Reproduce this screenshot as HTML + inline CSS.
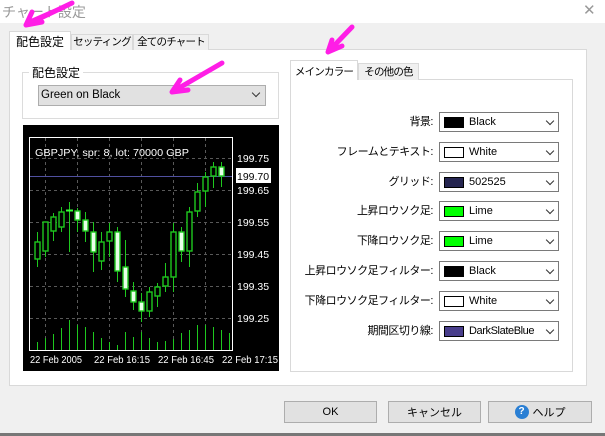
<!DOCTYPE html>
<html><head><meta charset="utf-8"><style>
*{margin:0;padding:0;box-sizing:border-box}
body{width:605px;height:436px;background:#f0f0f0;position:relative;overflow:hidden;font-family:"Liberation Sans","Noto Sans CJK JP",sans-serif;font-size:11px;color:#000}
.a{position:absolute}
.tab{position:absolute;border:1px solid #d9d9d9;border-bottom:none;background:#f0f0f0;text-align:center;line-height:17px;font-size:10.5px;white-space:nowrap;overflow:hidden;letter-spacing:-0.8px}
.combo{position:absolute;left:439px;width:120px;height:20px;border:1px solid #7a7a7a;background:#fff}
.sw{position:absolute;left:4px;top:4px;width:20px;height:11px;border:1px solid #000}
.ct{position:absolute;left:29px;top:2px;line-height:15px;font-size:11px;white-space:nowrap}
.chev{position:absolute;right:5px;top:5px;width:6px;height:6px;border-right:1px solid #333;border-bottom:1px solid #333;transform:rotate(45deg)}
.lbl{position:absolute;right:172px;text-align:right;font-size:11px;line-height:20px;white-space:nowrap;letter-spacing:-0.5px}
.btn{position:absolute;top:401px;height:22px;border:1px solid #adadad;background:#e1e1e1;display:flex;align-items:center;justify-content:center;font-size:11px}
</style></head><body>
<div class="a" style="left:0;top:0;width:605px;height:23px;background:#fff"></div>
<div class="a" style="left:2px;top:2px;font-size:14px;color:#999">チャート設定</div>
<div class="a" style="left:583px;top:1px;font-size:15px;color:#999">✕</div>

<div class="a" style="left:9px;top:49px;width:578px;height:337px;background:#fff;border:1px solid #d9d9d9"></div>
<div class="tab" style="left:9px;top:31px;width:62px;height:19px;background:#fff;font-size:12px;line-height:20px;z-index:2;letter-spacing:0">配色設定</div>
<div class="tab" style="left:71px;top:34px;width:62px;height:16px;line-height:15px">セッティング</div>
<div class="tab" style="left:133px;top:34px;width:76px;height:16px;line-height:15px">全てのチャート</div>

<div class="a" style="left:22px;top:72px;width:257px;height:47px;border:1px solid #dcdcdc"></div>
<div class="a" style="left:29px;top:64px;background:#fff;padding:0 3px;font-size:12px">配色設定</div>
<div class="a" style="left:38px;top:85px;width:228px;height:21px;border:1px solid #adadad;background:#e1e1e1"><span class="a" style="left:2px;top:3px;font-size:11.5px">Green on Black</span><div class="chev" style="top:4px;right:6px"></div></div>

<svg class="a" style="left:23px;top:125px" width="256" height="246" viewBox="23 125 256 246">
<rect x="23" y="125" width="256" height="246" fill="#000"/>
<g stroke="#fff" stroke-width="1" stroke-dasharray="3,3" opacity="0.35">
<line x1="30" y1="158.5" x2="232" y2="158.5"/><line x1="30" y1="190.5" x2="232" y2="190.5"/><line x1="30" y1="222.5" x2="232" y2="222.5"/><line x1="30" y1="254.5" x2="232" y2="254.5"/><line x1="30" y1="286.5" x2="232" y2="286.5"/><line x1="30" y1="318.5" x2="232" y2="318.5"/>
<line x1="45.5" y1="138" x2="45.5" y2="350"/><line x1="77.5" y1="138" x2="77.5" y2="350"/><line x1="109.5" y1="138" x2="109.5" y2="350"/><line x1="141.5" y1="138" x2="141.5" y2="350"/><line x1="173.5" y1="138" x2="173.5" y2="350"/><line x1="205.5" y1="138" x2="205.5" y2="350"/>
</g>
<line x1="30" y1="176.5" x2="232" y2="176.5" stroke="#5050a0"/>
<g stroke="#1ec81e" stroke-width="1">
<line x1="37.5" y1="232" x2="37.5" y2="267"/><line x1="45.5" y1="222" x2="45.5" y2="257"/><line x1="53.5" y1="213" x2="53.5" y2="241"/><line x1="61.5" y1="207" x2="61.5" y2="232"/><line x1="69.5" y1="202" x2="69.5" y2="252"/><line x1="77.5" y1="208" x2="77.5" y2="232"/><line x1="85.5" y1="212" x2="85.5" y2="242"/><line x1="93.5" y1="222" x2="93.5" y2="272"/><line x1="101.5" y1="232" x2="101.5" y2="270"/><line x1="109.5" y1="223" x2="109.5" y2="257"/><line x1="117.5" y1="227" x2="117.5" y2="282"/><line x1="125.5" y1="240" x2="125.5" y2="297"/><line x1="133.5" y1="282" x2="133.5" y2="310"/><line x1="141.5" y1="293" x2="141.5" y2="322"/><line x1="149.5" y1="287" x2="149.5" y2="317"/><line x1="157.5" y1="283" x2="157.5" y2="307"/><line x1="165.5" y1="263" x2="165.5" y2="292"/><line x1="173.5" y1="223" x2="173.5" y2="292"/><line x1="181.5" y1="227" x2="181.5" y2="262"/><line x1="189.5" y1="207" x2="189.5" y2="267"/><line x1="197.5" y1="183" x2="197.5" y2="217"/><line x1="205.5" y1="172" x2="205.5" y2="207"/><line x1="213.5" y1="162" x2="213.5" y2="188"/><line x1="221.5" y1="162" x2="221.5" y2="187"/>
</g>
<g stroke="#1ec81e" stroke-width="1.4" fill="#000">
<rect x="35" y="242" width="5" height="17"/><rect x="43" y="222" width="5" height="29"/><rect x="51" y="217" width="5" height="14"/><rect x="59" y="212" width="5" height="15"/><rect x="99" y="242" width="5" height="19"/><rect x="107" y="232" width="5" height="9"/><rect x="147" y="292" width="5" height="19"/><rect x="155" y="287" width="5" height="9"/><rect x="163" y="277" width="5" height="9"/><rect x="171" y="232" width="5" height="45"/><rect x="187" y="212" width="5" height="39"/><rect x="195" y="192" width="5" height="19"/><rect x="203" y="177" width="5" height="14"/><rect x="211" y="167" width="5" height="9"/>
</g>
<g stroke="#1ec81e" stroke-width="1.4" fill="#e8ffe8">
<rect x="75" y="211" width="5" height="9"/><rect x="83" y="220" width="5" height="11"/><rect x="91" y="232" width="5" height="20"/><rect x="115" y="232" width="5" height="39"/><rect x="123" y="267" width="5" height="22"/><rect x="131" y="291" width="5" height="11"/><rect x="139" y="302" width="5" height="9"/><rect x="179" y="232" width="5" height="19"/><rect x="219" y="167" width="5" height="9"/>
</g>
<line x1="66" y1="210.5" x2="73" y2="210.5" stroke="#3f3" stroke-width="2"/>
<g stroke="#1ec81e" stroke-width="1">
<line x1="37.5" y1="342" x2="37.5" y2="350"/><line x1="45.5" y1="338" x2="45.5" y2="350"/><line x1="53.5" y1="334" x2="53.5" y2="350"/><line x1="61.5" y1="328" x2="61.5" y2="350"/><line x1="69.5" y1="320" x2="69.5" y2="350"/><line x1="77.5" y1="325" x2="77.5" y2="350"/><line x1="85.5" y1="327" x2="85.5" y2="350"/><line x1="93.5" y1="332" x2="93.5" y2="350"/><line x1="101.5" y1="338" x2="101.5" y2="350"/><line x1="109.5" y1="342" x2="109.5" y2="350"/><line x1="117.5" y1="345" x2="117.5" y2="350"/><line x1="125.5" y1="332" x2="125.5" y2="350"/><line x1="133.5" y1="337" x2="133.5" y2="350"/><line x1="141.5" y1="332" x2="141.5" y2="350"/><line x1="149.5" y1="338" x2="149.5" y2="350"/><line x1="157.5" y1="342" x2="157.5" y2="350"/><line x1="165.5" y1="341" x2="165.5" y2="350"/><line x1="173.5" y1="339" x2="173.5" y2="350"/><line x1="181.5" y1="333" x2="181.5" y2="350"/><line x1="189.5" y1="330" x2="189.5" y2="350"/><line x1="197.5" y1="325" x2="197.5" y2="350"/><line x1="205.5" y1="325" x2="205.5" y2="350"/><line x1="213.5" y1="327" x2="213.5" y2="350"/><line x1="221.5" y1="330" x2="221.5" y2="350"/><line x1="229.5" y1="333" x2="229.5" y2="350"/>
</g>
<rect x="29.5" y="137.5" width="203" height="213" fill="none" stroke="#fff"/>
<g fill="#fff" font-family="Liberation Sans,sans-serif" font-size="10.5">
<text x="35" y="156" textLength="154" lengthAdjust="spacingAndGlyphs">GBPJPY, spr: 8, lot: 70000 GBP</text>
<text x="237" y="162">199.75</text><text x="237" y="194">199.65</text><text x="237" y="226">199.55</text><text x="237" y="258">199.45</text><text x="237" y="290">199.35</text><text x="237" y="322">199.25</text>
<text x="30" y="363" textLength="52" lengthAdjust="spacingAndGlyphs" font-size="10">22 Feb 2005</text><text x="94" y="363" textLength="56" lengthAdjust="spacingAndGlyphs" font-size="10">22 Feb 16:15</text><text x="158" y="363" textLength="56" lengthAdjust="spacingAndGlyphs" font-size="10">22 Feb 16:45</text><text x="222" y="363" textLength="56" lengthAdjust="spacingAndGlyphs" font-size="10">22 Feb 17:15</text>
</g>
<rect x="236" y="168" width="35" height="15" fill="#fff"/>
<text x="237" y="180" font-family="Liberation Sans,sans-serif" font-size="10.5">199.70</text>
</svg>

<div class="a" style="left:290px;top:79px;width:283px;height:293px;border:1px solid #d9d9d9;background:#fff"></div>
<div class="tab" style="left:290px;top:60px;width:68px;height:20px;background:#fff;line-height:22px;z-index:2">メインカラー</div>
<div class="tab" style="left:358px;top:63px;width:61px;height:17px;line-height:17px">その他の色</div>

<div class="lbl" style="top:112px">背景:</div>
<div class="combo" style="top:112px"><div class="sw" style="background:#000"></div><span class="ct">Black</span><div class="chev"></div></div>
<div class="lbl" style="top:142px">フレームとテキスト:</div>
<div class="combo" style="top:142px"><div class="sw" style="background:#fff"></div><span class="ct">White</span><div class="chev"></div></div>
<div class="lbl" style="top:172px">グリッド:</div>
<div class="combo" style="top:172px"><div class="sw" style="background:#252550"></div><span class="ct">502525</span><div class="chev"></div></div>
<div class="lbl" style="top:201px">上昇ロウソク足:</div>
<div class="combo" style="top:201px"><div class="sw" style="background:#0f0"></div><span class="ct">Lime</span><div class="chev"></div></div>
<div class="lbl" style="top:231px">下降ロウソク足:</div>
<div class="combo" style="top:231px"><div class="sw" style="background:#0f0"></div><span class="ct">Lime</span><div class="chev"></div></div>
<div class="lbl" style="top:261px">上昇ロウソク足フィルター:</div>
<div class="combo" style="top:261px"><div class="sw" style="background:#000"></div><span class="ct">Black</span><div class="chev"></div></div>
<div class="lbl" style="top:291px">下降ロウソク足フィルター:</div>
<div class="combo" style="top:291px"><div class="sw" style="background:#fff"></div><span class="ct">White</span><div class="chev"></div></div>
<div class="lbl" style="top:321px">期間区切り線:</div>
<div class="combo" style="top:321px"><div class="sw" style="background:#483d8b"></div><span class="ct" style="letter-spacing:-0.4px">DarkSlateBlue</span><div class="chev"></div></div>

<div class="btn" style="left:284px;width:93px">OK</div>
<div class="btn" style="left:388px;width:93px">キャンセル</div>
<div class="btn" style="left:488px;width:104px"><span style="display:inline-block;width:14px;height:14px;border-radius:50%;background:#2a7fd4;color:#fff;font-weight:bold;font-size:10px;line-height:14px;text-align:center;margin-right:4px">?</span>ヘルプ</div>
<div class="a" style="left:0;top:433px;width:605px;height:3px;background:#777"></div>

<svg class="a" style="left:0;top:0" width="605" height="436">
<g stroke="#ff1ee6" stroke-width="5" stroke-linecap="round" fill="none">
<path d="M72 3 L26 25 M26 25 L32 12 M26 25 L42 22 M62 8 L30 22"/>
<path d="M222 63 L172 92 M172 92 L180 80 M172 92 L188 90"/>
<path d="M352 27 L328 52 M328 52 L332 40 M328 52 L342 46"/>
</g>
</svg>
</body></html>
